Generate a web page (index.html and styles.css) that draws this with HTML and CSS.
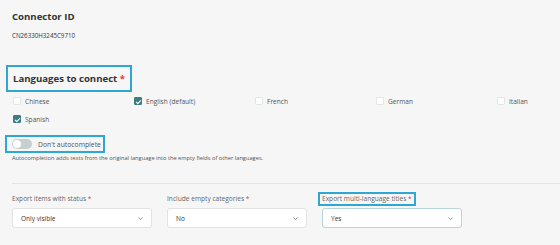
FILE: index.html
```html
<!DOCTYPE html>
<html lang="en">
<head>
  <meta charset="UTF-8" />
  <title>Connector settings</title>
  <link rel="stylesheet" href="styles.css">
</head>
<body>
<div id="settings">
  <h2 class="title">Connector ID</h2>
  <p class="conn-id">CN26330H3245C9710</p>

  <div class="hl hl-lang">
    <h2 class="title">Languages to connect <span class="req">*</span></h2>
  </div>

  <div class="lang-grid">
    <label class="check"><span class="box"></span>Chinese</label>
    <label class="check"><span class="box on"></span>English (default)</label>
    <label class="check"><span class="box"></span>French</label>
    <label class="check"><span class="box"></span>German</label>
    <label class="check"><span class="box"></span>Italian</label>
    <label class="check"><span class="box on"></span>Spanish</label>
  </div>

  <div class="hl hl-toggle">
    <span class="switch"><span class="knob"></span></span>
    <span class="toggle-text">Don't autocomplete</span>
  </div>
  <p class="hint">Autocompletion adds texts from the original language into the empty fields of other languages.</p>

  <hr class="divider">

  <div class="exports">
    <div class="field">
      <div class="label">Export items with status <span class="req">*</span></div>
      <div class="select"><span>Only visible</span><svg viewBox="0 0 10 6"><path d="M1 1l4 4 4-4"/></svg></div>
    </div>
    <div class="field">
      <div class="label">Include empty categories <span class="req">*</span></div>
      <div class="select"><span>No</span><svg viewBox="0 0 10 6"><path d="M1 1l4 4 4-4"/></svg></div>
    </div>
    <div class="field">
      <div class="label hl hl-label">Export multi-language titles <span class="req">*</span></div>
      <div class="select active"><span>Yes</span><svg viewBox="0 0 10 6"><path d="M1 1l4 4 4-4"/></svg></div>
    </div>
  </div>
</div>
</body>
</html>
```

FILE: styles.css
```css
* { box-sizing: border-box; }
html, body {
  margin: 0;
  height: 100%;
  overflow: hidden;
  background: #f6f6f6;
  font-family: 'Open Sans', 'Liberation Sans', sans-serif;
  color: #333;
}
#settings { padding: 10px 0 0 12px; }

.title {
  margin: 0;
  font-size: 9.6px;
  line-height: 14px;
  font-weight: 700;
  color: #333;
}
.req { color: #d9453d; }

.conn-id {
  margin: 8px 0 0;
  font-size: 6.2px;
  line-height: 8px;
  color: #333;
}

/* highlighted blocks */
.hl { border: 2px solid #2ea7d3; }
.hl-lang {
  display: inline-block;
  margin: 25px 0 0 -6px;
  padding: 0 5px;
  height: 27px;
}
.hl-lang .title { line-height: 23px; }

.lang-grid {
  display: grid;
  grid-template-columns: repeat(4, 121px) 1fr;
  grid-auto-rows: 18px;
  margin-left: 1px;
}
.check {
  display: flex;
  align-items: center;
  gap: 4px;
  font-size: 6.6px;
  color: #555;
}
.box {
  width: 8px; height: 8px;
  background: #fff;
  border: 1px solid #e6e6e6;
  border-radius: 1px;
  position: relative;
}
.box.on { background: #3d7c82; border-color: #3d7c82; }
.box.on::after {
  content: '';
  position: absolute;
  left: 2px; top: 0.5px;
  width: 2px; height: 4px;
  border: solid #fff;
  border-width: 0 1px 1px 0;
  transform: rotate(45deg);
}

.hl-toggle {
  display: flex;
  align-items: center;
  width: 100px;
  height: 18px;
  margin: 7px 0 0 -7px;
  padding-left: 5px;
}
.switch {
  width: 20px; height: 10px;
  border-radius: 5px;
  background: #c7cfd0;
  position: relative;
}
.knob {
  position: absolute;
  left: 1px; top: 1px;
  width: 8px; height: 8px;
  border-radius: 50%;
  background: #fff;
}
.toggle-text {
  margin-left: 6px;
  font-size: 6.8px;
  color: #555;
}
.hint {
  margin: 0;
  font-size: 5.7px;
  line-height: 10px;
  color: #555;
}

.divider {
  margin: 20px 0 0;
  border: 0;
  border-top: 1px solid #e4e4e4;
}

.exports {
  display: flex;
  gap: 15px;
  margin-top: 10px;
}
.field { width: 140px; }
.label {
  font-size: 6.6px;
  line-height: 10px;
  color: #666;
}
.hl-label {
  width: fit-content;
  margin: -2px 0 -2px -4px;
  padding: 0 2px;
}
.select {
  display: flex;
  align-items: center;
  justify-content: space-between;
  margin-top: 4px;
  height: 20px;
  padding: 0 8px;
  background: #fff;
  border: 1px solid #e2e2e2;
  border-radius: 3px;
  font-size: 6.5px;
  color: #333;
}
.select.active { border-color: #b9d6d8; }
.select svg { width: 5px; height: 3px; fill: none; stroke: #555; stroke-width: 1.3; }
```
